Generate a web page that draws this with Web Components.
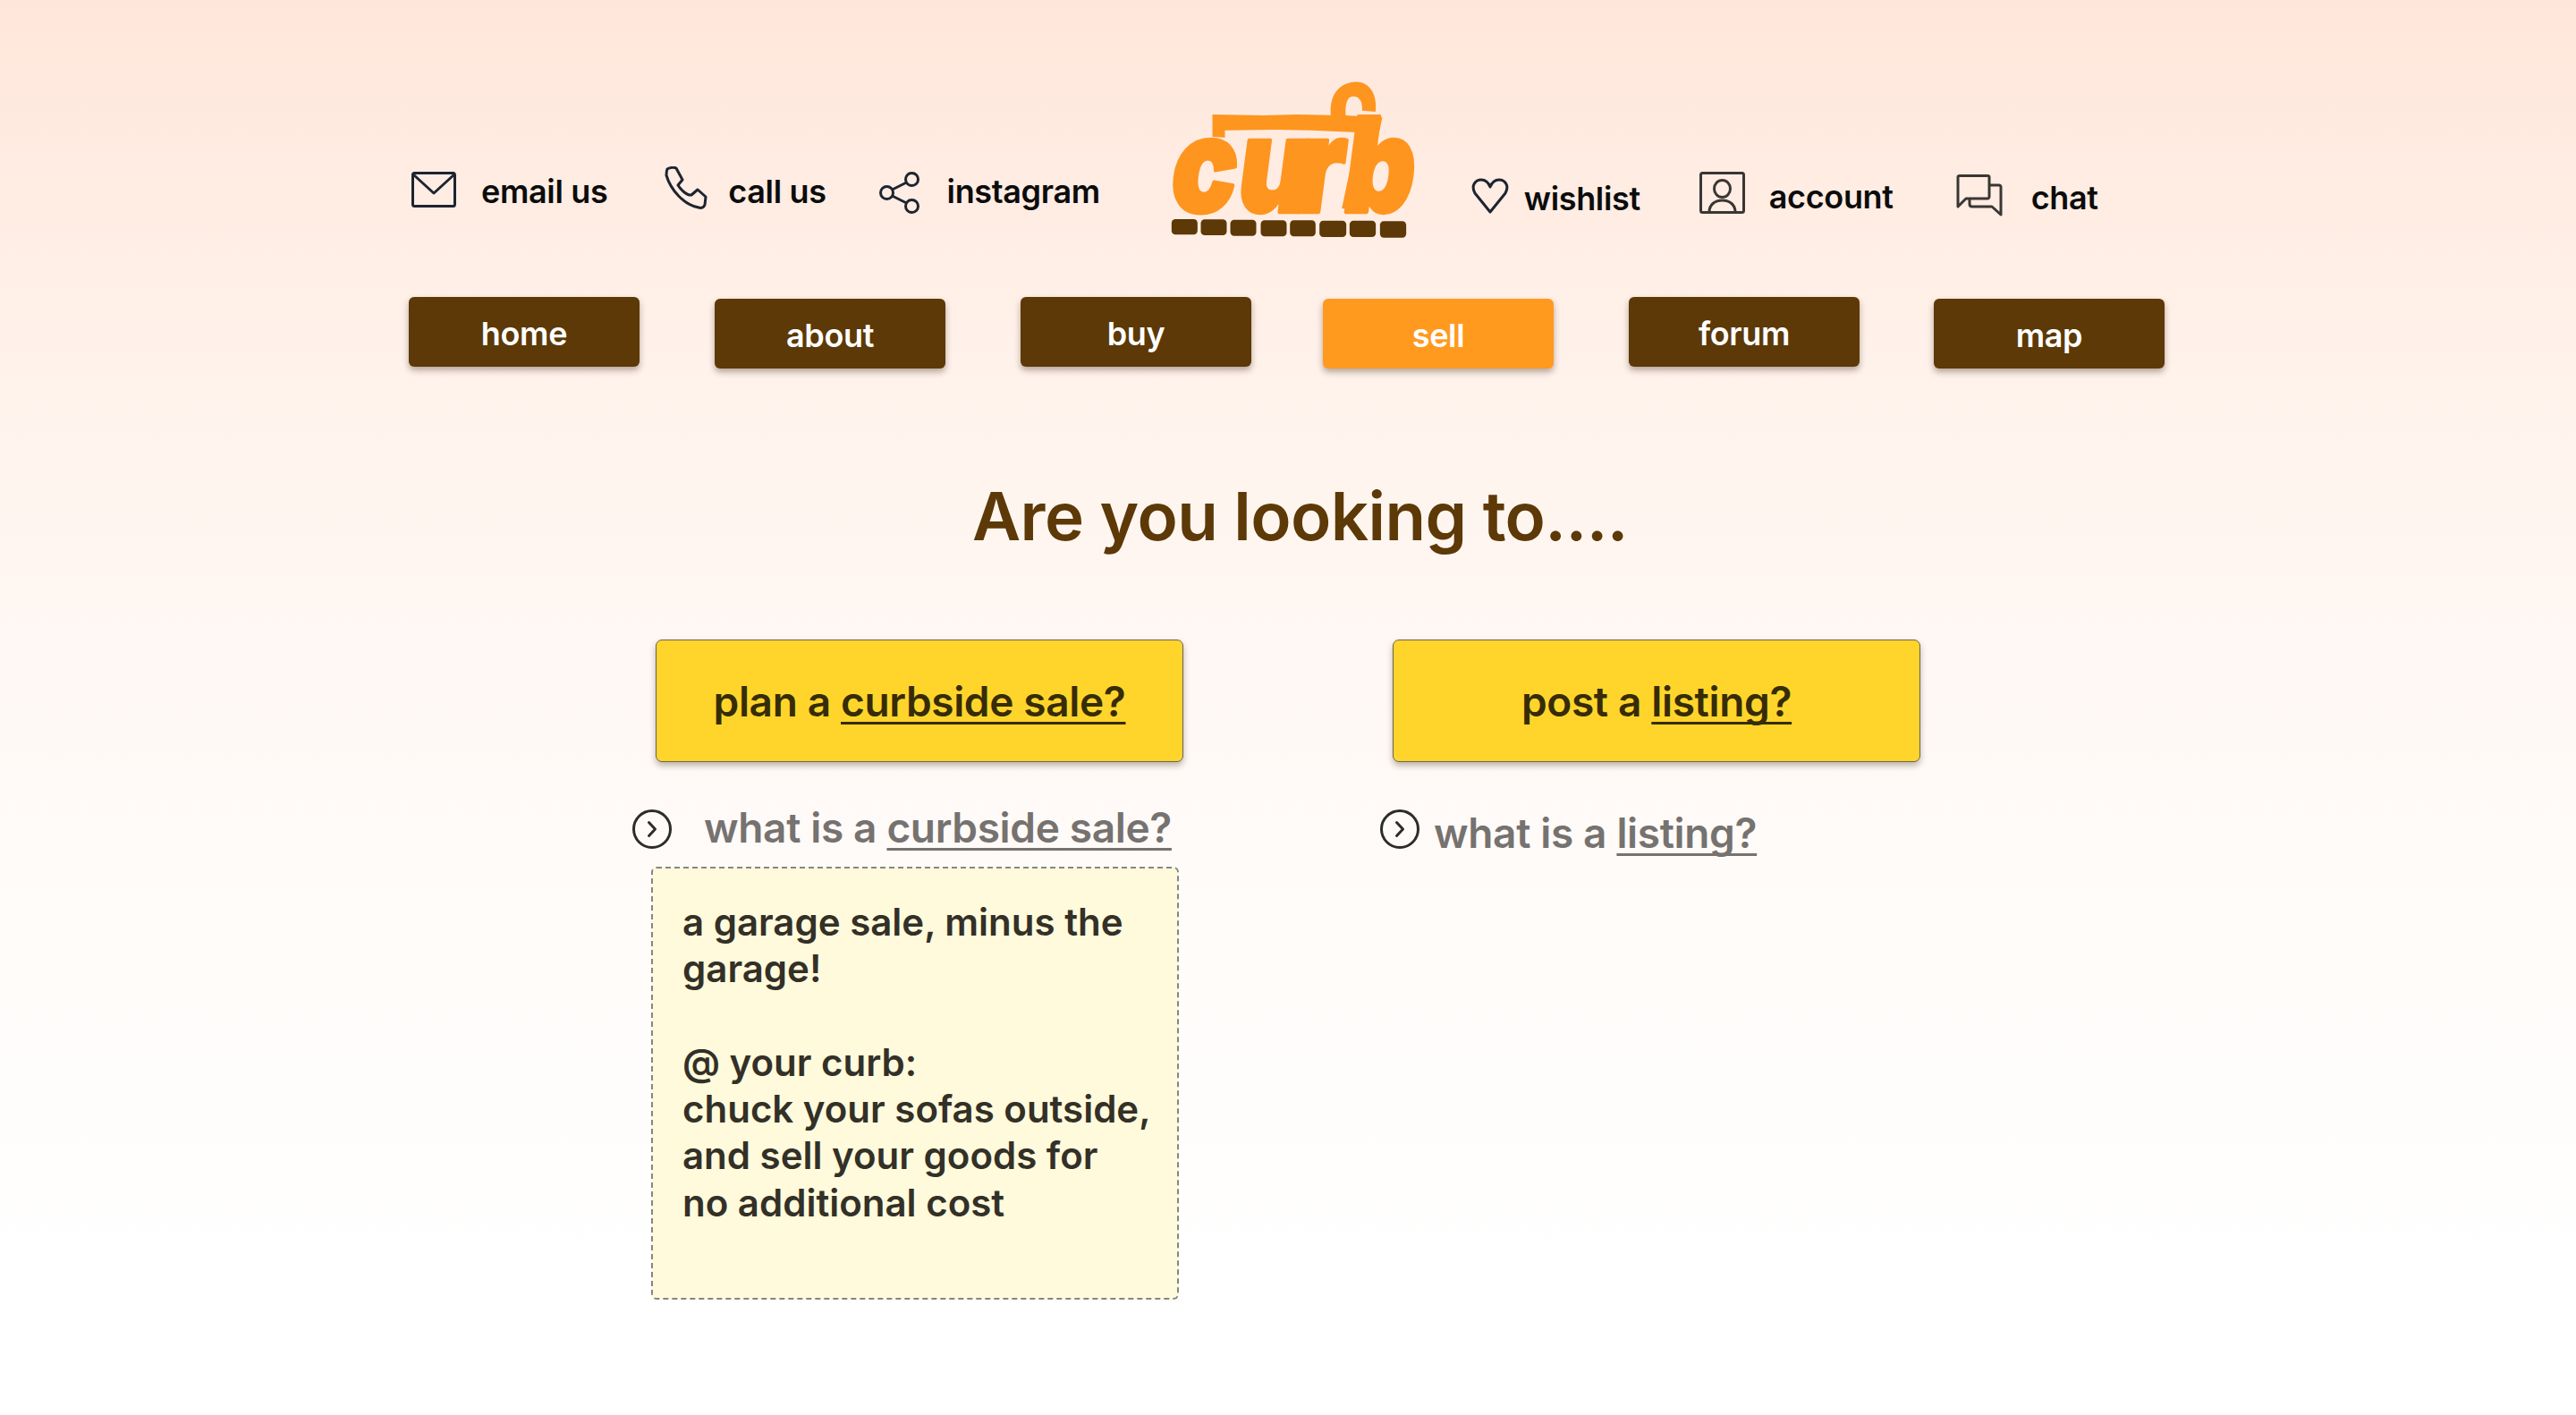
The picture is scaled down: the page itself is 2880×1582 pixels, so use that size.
<!DOCTYPE html>
<html lang="en"><head><meta charset="utf-8"><title>curb</title>
<style>
html,body{margin:0;padding:0}
body{height:1582px;overflow:hidden;background:linear-gradient(180deg,#ffe6da 0%,#fff3ec 28%,#fffaf7 55%,#ffffff 92%);font-family:Inter,"Noto Sans",sans-serif;font-weight:600}
</style></head><body>
<template id="t-app"><style>
:host{display:block}
.top{display:flex;align-items:flex-start;height:332px;padding:85px 0 0 460px;box-sizing:border-box}
.nav{display:flex;align-items:flex-start;padding-left:457px;height:100px}
h1{margin:0;height:90px;padding-top:100px;font:600 74.500px/90px Inter,sans-serif;letter-spacing:-.6px;color:#5c3907;text-align:center;width:2907px}
.cols{display:flex;padding-top:93px}
.c1{width:836px;margin-left:707px}
.c2{width:640px}
</style>
<div class="top"><slot name="top"></slot></div>
<div class="nav"><slot name="nav"></slot></div>
<h1><slot name="title"></slot></h1>
<div class="cols"><div class="c1"><slot name="c1"></slot></div><div class="c2"><slot name="c2"></slot></div></div>
</template>

<template id="t-top"><style>
:host{display:flex;align-items:flex-start;flex:none;color:#0c0c0c;font:600 36px/40px Inter,sans-serif;letter-spacing:-.35px}
.i{display:flex;flex:none;margin-top:var(--it,0);margin-right:var(--gap,28px)}
.l{margin-top:var(--lt,0);white-space:nowrap}
</style><span class="i"><slot name="icon"></slot></span><span class="l"><slot></slot></span></template>

<template id="t-logo"><style>
:host{display:block;flex:none;width:277px;height:180px}
svg{display:block;width:277px;height:180px;overflow:visible}
text{font-family:Inter,sans-serif;font-weight:900;font-size:440px;fill:#fe951f;stroke:#fe951f;stroke-width:13px;stroke-linejoin:round}
</style><svg viewBox="140 85 830 540" role="img" aria-label="curb logo">
<path fill="#fe951f" d="M288 205L460 208L570 205L685 207C682 170 690 138 712 118C735 97 772 88 800 103C826 117 840 150 835 196L790 192C792 168 786 146 762 144C742 143 732 165 735 208L858 215L835 320L785 530L722 520L776 265L620 258L500 256L330 258V282L288 280Z"/>
<text transform="translate(136 531) scale(.83 1) skewX(-9)" x="0 271 505 700">curb</text>
<g fill="#5c3907"><rect x="151" y="556" width="87" height="52" rx="13"/><rect x="249" y="557" width="87" height="53" rx="13"/><rect x="348" y="558" width="87" height="54" rx="13"/><rect x="450" y="560" width="87" height="54" rx="13"/><rect x="548" y="560" width="86" height="54" rx="13"/><rect x="647" y="561" width="90" height="55" rx="13"/><rect x="748" y="561" width="88" height="55" rx="13"/><rect x="850" y="563" width="88" height="55" rx="13"/></g>
</svg></template>

<template id="t-btn"><style>
:host{display:flex;flex:none;align-items:center;justify-content:center;box-sizing:border-box;width:258px;height:78px;padding-top:3px;border-radius:6px;background:var(--bg,#5c3907);color:#fff;font:600 36px/40px Inter,sans-serif;letter-spacing:-.35px;box-shadow:0 4px 7px rgba(60,40,20,.38)}
</style><slot></slot></template>

<template id="t-cta"><style>
:host{display:flex;align-items:center;justify-content:center;box-sizing:border-box;width:590px;height:137px;border:1.5px solid #6b6552;border-radius:7px;background:#ffd52b;color:#362c06;font:600 46px/50px Inter,sans-serif;letter-spacing:-.35px;box-shadow:0 4px 7px rgba(60,50,30,.35)}
::slotted(u){text-decoration-thickness:3px;text-underline-offset:6px;text-decoration-skip-ink:none}
</style><div><slot></slot></div></template>

<template id="t-q"><style>
:host{display:flex;align-items:flex-start;color:#767270;font:600 46px/50px Inter,sans-serif;letter-spacing:-.35px}
svg{flex:none;width:44px;height:44px;margin-right:var(--gap,36px)}
.t{margin-top:var(--tt,0);white-space:nowrap}
::slotted(u){text-decoration-thickness:3px;text-underline-offset:6px;text-decoration-skip-ink:none}
</style><svg viewBox="0 0 44 44"><circle cx="22" cy="22" r="20.5" fill="none" stroke="#2c2c2c" stroke-width="3"/><path d="M18.500 14.500L25.500 22L18.500 29.500" fill="none" stroke="#2c2c2c" stroke-width="3" stroke-linecap="round" stroke-linejoin="round"/></svg><span class="t"><slot></slot></span></template>

<template id="t-note"><style>
:host{display:block;box-sizing:border-box;width:590px;height:484px;margin:19px 0 0 21px;padding:34px 10px 0 33px;border:2px dashed #858585;border-radius:6px;background:#fffadb;color:#333028;font:600 42px/52.300px Inter,sans-serif}
</style><slot></slot></template>

<curb-app>
<top-link slot="top" style="--gap:28px;--lt:109px;--it:107px"><svg slot="icon" width="50" height="40" viewBox="0 0 50 40" fill="none" stroke="#1e2430" stroke-width="3" stroke-linejoin="round"><rect x="1.500" y="1.500" width="47" height="37" rx="2"/><path d="M2 3L25 24L48 3"/></svg>email us</top-link>
<top-link slot="top" style="margin-left:64px;--gap:23px;--lt:109px;--it:101px"><svg slot="icon" width="48" height="48" viewBox="0 0 48 48" fill="none" stroke="#1e2430" stroke-width="3" stroke-linejoin="round"><path d="M3 3C6 1 11 1 13 2C15 6 18 11 20 15L15 21C18 26 25 33 30 32L37 26L46 34L45 43C44 46 41 47 38 46C22 43 7 27 2 10C2 7 2 5 3 3Z"/></svg>call us</top-link>
<top-link slot="top" style="margin-left:59px;--gap:30px;--lt:109px;--it:107px"><svg slot="icon" width="46" height="47" viewBox="0 0 46 47" fill="none" stroke="#1e2430" stroke-width="3"><circle cx="36.500" cy="8.500" r="7"/><circle cx="8.500" cy="23.500" r="7"/><circle cx="36.500" cy="38.500" r="7"/><path d="M30.500 12L14.500 20M14.500 27L30.500 35"/></svg>instagram</top-link>
<curb-logo slot="top" style="margin:3px 0 0 76px"></curb-logo>
<top-link slot="top" style="margin-left:62px;--gap:17px;--lt:117px;--it:114px"><svg slot="icon" width="42" height="40" viewBox="0 0 42 40" fill="none" stroke="#1e2430" stroke-width="3" stroke-linejoin="round"><path d="M21 38L4 17C-1 8 5 2 11 2C16 2 19 5 21 10C23 5 26 2 31 2C37 2 43 8 38 17Z"/></svg>wishlist</top-link>
<top-link slot="top" style="margin-left:66px;--gap:27px;--lt:115px;--it:107px"><svg slot="icon" width="51" height="47" viewBox="0 0 51 47" fill="none" stroke="#3a3634" stroke-width="3"><rect x="1.500" y="1.500" width="48" height="44" rx="2"/><ellipse cx="25.500" cy="19" rx="9" ry="9.500"/><path d="M11 45C11 37 17 32 25.500 32C34 32 40 37 40 45"/></svg>account</top-link>
<top-link slot="top" style="margin-left:69px;--gap:32px;--lt:116px;--it:110px"><svg slot="icon" width="53" height="47" viewBox="0 0 53 47" fill="none" stroke="#3a3634" stroke-width="3" stroke-linejoin="round"><path d="M3 36V3C3 2 4 1.500 5 1.500H36C37 1.500 38 2 38 3V25C38 26 37 27 36 27H12Z"/><path d="M38 12H49C50 12 51 13 51 14V45L41 36H19C17 36 16 35 16 33V27"/></svg>chat</top-link>

<curb-btn slot="nav">home</curb-btn>
<curb-btn slot="nav" style="margin:2px 0 0 84px">about</curb-btn>
<curb-btn slot="nav" style="margin-left:84px">buy</curb-btn>
<curb-btn slot="nav" style="margin:2px 0 0 80px;--bg:#ff9a1f">sell</curb-btn>
<curb-btn slot="nav" style="margin-left:84px">forum</curb-btn>
<curb-btn slot="nav" style="margin:2px 0 0 83px">map</curb-btn>

<span slot="title">Are you looking to....</span>

<div slot="c1">
<curb-cta style="margin-left:26px">plan a <u>curbside sale?</u></curb-cta>
<curb-q style="margin-top:53px;--gap:36px;--tt:-5px">what is a <u>curbside sale?</u></curb-q>
<curb-note>a garage sale, minus the<br>garage!<br><br>@ your curb:<br>chuck your sofas outside,<br>and sell your goods for<br>no additional cost</curb-note>
</div>
<div slot="c2">
<curb-cta style="margin-left:14px">post a <u>listing?</u></curb-cta>
<curb-q style="margin-top:53px;--gap:16px;--tt:1px">what is a <u>listing?</u></curb-q>
</div>
</curb-app>

<script>
function reg(name,tid){customElements.define(name,class extends HTMLElement{constructor(){super();this.attachShadow({mode:'open'}).appendChild(document.getElementById(tid).content.cloneNode(true));}});}
reg('curb-app','t-app');reg('top-link','t-top');reg('curb-logo','t-logo');reg('curb-btn','t-btn');reg('curb-cta','t-cta');reg('curb-q','t-q');reg('curb-note','t-note');
</script>
</body></html>
